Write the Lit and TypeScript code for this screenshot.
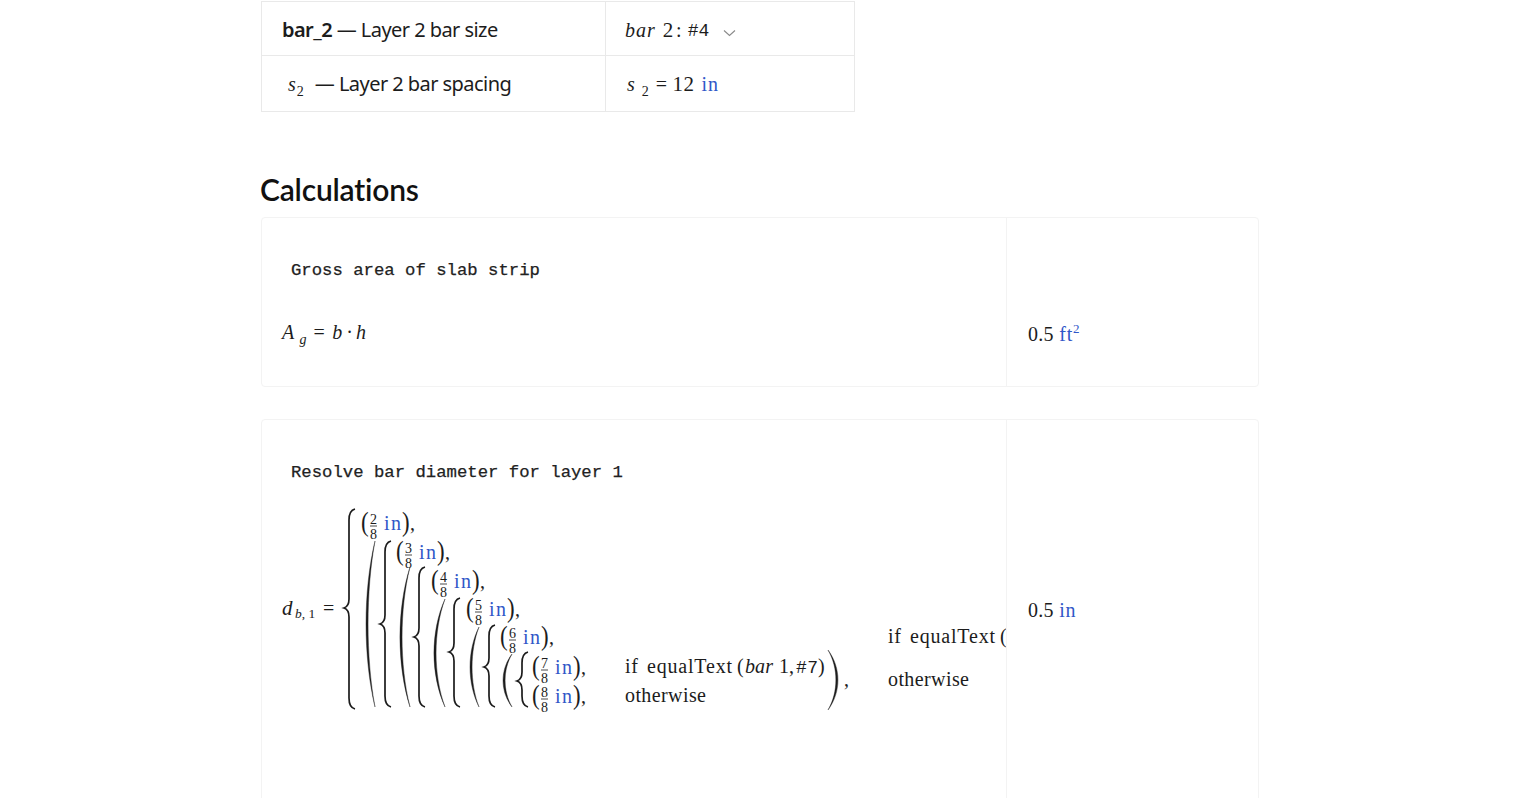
import { LitElement, html, css, svg } from "lit";
import { customElement } from "lit/decorators.js";

// left column of each "(n/8 in)," row, and the baselines
const rows = [
  { n: 2, x: 361, y: 531 },
  { n: 3, x: 396, y: 560 },
  { n: 4, x: 431, y: 589 },
  { n: 5, x: 466, y: 617 },
  { n: 6, x: 500, y: 645 },
  { n: 7, x: 532, y: 675 },
  { n: 8, x: 532, y: 704 },
];

// stem x, top, tip y, bottom
const braces = [
  [349, 510, 609, 710],
  [385, 542, 625, 708],
  [419, 568, 638, 708],
  [454, 599, 653, 708],
  [489, 626, 668, 708],
  [522, 653, 682, 708],
];

// bulge, tips, top, bottom
const parens = [
  [366, 375, 542, 708],
  [400, 410, 568, 708],
  [434, 445, 600, 708],
  [470, 479, 628, 708],
  [503, 512, 655, 708],
];

function bracePath([x, t, m, b]: number[]) {
  return `M${x + 6},${t} C${x + 2},${t + 1} ${x},${t + 4} ${x},${t + 11} L${x},${m - 9} C${x},${m - 4} ${x - 2},${m - 1} ${x - 5},${m} C${x - 2},${m + 1} ${x},${m + 4} ${x},${m + 9} L${x},${b - 11} C${x},${b - 4} ${x + 2},${b - 1} ${x + 6},${b}`;
}

// crescent, controls pushed out so the middle of the curve lands on the bulge
function parenPath(bulge: number, tip: number, t: number, b: number) {
  const h = b - t;
  const dir = tip > bulge ? 1 : -1;
  const c = tip - (tip - bulge) / 0.75;
  const ci = c + dir * 2.8;
  return `M${tip},${t} C${c},${t + h * 0.3} ${c},${t + h * 0.7} ${tip},${b} C${ci},${t + h * 0.7} ${ci},${t + h * 0.3} ${tip},${t}Z`;
}

@customElement("app-root")
export class AppRoot extends LitElement {
  static styles = css`
    :host {
      display: block;
      height: 798px;
      overflow: hidden;
      background: #fff;
      color: #1c1c1c;
      font-family: "Noto Sans", sans-serif;
    }
    .page {
      width: 998px;
      margin: 0 auto;
      padding-top: 1px;
    }
    table {
      border-collapse: collapse;
      table-layout: fixed;
      width: 594px;
    }
    td {
      border: 1px solid #e9e9e9;
      padding: 2px 0 0 20px;
      font-size: 20px;
      letter-spacing: -0.55px;
      white-space: nowrap;
    }
    tr.a td {
      height: 51px;
    }
    tr.b td {
      height: 55px;
      padding-top: 0;
    }
    td.name {
      width: 323px;
    }
    b {
      font-weight: 600;
    }
    .m {
      font-family: "Liberation Serif", serif;
      font-size: 20px;
      letter-spacing: 0.3px;
    }
    .m i {
      letter-spacing: 1px;
    }
    .m sub {
      font-size: 14px;
      line-height: 0;
      letter-spacing: 0;
    }
    .u {
      color: #3057c8;
      letter-spacing: 0.8px;
    }
    .num {
      font-size: 21px;
      letter-spacing: 0.6px;
    }
    .tt {
      font-family: "Liberation Mono", monospace;
      font-size: 18px;
      letter-spacing: 0;
    }
    .label-math {
      margin: 0 11px 0 6px;
    }
    .pick {
      display: inline-flex;
      align-items: center;
      margin-left: -1px;
    }
    .pick .two {
      margin: 0 2px 0 7px;
    }
    .pick .colon {
      margin-right: 6px;
    }
    .pick svg {
      margin-left: 14px;
      margin-top: 5px;
    }
    .s2 {
      margin-left: 1px;
    }
    .s2 sub {
      margin: 0 7px 0 6px;
    }
    .s2 .eq {
      margin-right: 5px;
    }
    .s2 .num {
      margin-right: 7px;
    }
    h2 {
      margin: 60px 0 11px -1px;
      font-family: Lato, sans-serif;
      font-size: 30px;
      line-height: 34px;
      font-weight: 600;
      letter-spacing: -0.2px;
      color: #111;
    }
    .card {
      display: grid;
      grid-template-columns: 744px 1fr;
      border: 1px solid #f3f3f3;
      border-radius: 4px;
      margin-bottom: 32px;
    }
    .title {
      padding: 39px 0 18px 29px;
      font-family: "Liberation Mono", monospace;
      font-size: 17.3px;
      line-height: 28px;
      white-space: pre;
      color: #222;
      -webkit-text-stroke: 0.25px #222;
    }
    .side {
      border-left: 1px solid #f3f3f3;
    }
    .formula {
      min-height: 58px;
      padding: 0 0 25px 20px;
      display: flex;
      align-items: center;
      overflow: hidden;
    }
    .formula svg {
      display: block;
      flex: none;
      overflow: visible;
    }
    .value {
      padding: 0 0 21px 21px;
      display: flex;
      align-items: center;
    }
    .value.tall {
      padding-bottom: 23px;
    }
    .value sup {
      font-size: 13px;
      line-height: 0;
    }
    .tail {
      height: 120px;
    }
    .ag i {
      letter-spacing: 0;
    }
    .ag .eq {
      margin: 0 7px;
    }
    .ag .dot {
      margin: 0 3px 0 4px;
    }
    text {
      font-family: "Liberation Serif", serif;
      fill: #1c1c1c;
    }
    text.blue {
      fill: #3057c8;
    }
    text.tt2 {
      font-family: "Liberation Mono", monospace;
    }
    path.brace {
      fill: none;
      stroke: #1c1c1c;
      stroke-width: 1.7;
    }
    path.paren {
      fill: #1c1c1c;
      stroke: #1c1c1c;
      stroke-width: 0.4;
    }
    line {
      stroke: #1c1c1c;
      stroke-width: 0.8;
    }
  `;

  private renderRow(r: { n: number; x: number; y: number }) {
    return svg`
      <text transform="translate(${r.x} ${r.y + 1}) scale(.85 1)" font-size="27">(</text>
      <text x=${r.x + 12.5} y=${r.y - 6} font-size="14" text-anchor="middle">${r.n}</text>
      <line x1=${r.x + 9} x2=${r.x + 16} y1=${r.y - 4} y2=${r.y - 4}></line>
      <text x=${r.x + 12.5} y=${r.y + 9} font-size="14" text-anchor="middle">8</text>
      <text class="blue" x=${r.x + 23} y=${r.y} font-size="20" textLength="17">in</text>
      <text transform="translate(${r.x + 41} ${r.y + 1}) scale(.85 1)" font-size="27">)</text>
      <text x=${r.x + 49} y=${r.y} font-size="20">,</text>
    `;
  }

  private renderBigFormula() {
    return html`<svg width="724" height="208" viewBox="282 506 724 208">
      <text x="282" y="616" font-size="21" font-style="italic">d</text>
      <text x="295" y="619" font-size="13.5"><tspan font-style="italic">b</tspan>, 1</text>
      <text x="323" y="616" font-size="20">=</text>
      ${braces.map((b) => svg`<path class="brace" d=${bracePath(b)}></path>`)}
      ${parens.map(([l, r, t, b]) => svg`<path class="paren" d=${parenPath(l, r, t, b)}></path>`)}
      ${rows.map((r) => this.renderRow(r))}

      <text x="625" y="674" font-size="20" textLength="13">if</text>
      <text x="647" y="674" font-size="20" textLength="85">equalText</text>
      <text x="737" y="674" font-size="20">(</text>
      <text x="745" y="674" font-size="20" font-style="italic" textLength="28">bar</text>
      <text x="779" y="674" font-size="20">1,</text>
      <text class="tt2" x="796" y="674" font-size="18" textLength="22">#7</text>
      <text x="818" y="674" font-size="20">)</text>
      <text x="625" y="703" font-size="20" textLength="81">otherwise</text>
      <path class="paren" d=${parenPath(838, 828, 651, 711)}></path>
      <text x="844" y="687" font-size="20">,</text>

      <text x="888" y="644" font-size="20" textLength="13">if</text>
      <text x="910" y="644" font-size="20" textLength="85">equalText</text>
      <text x="1000" y="644" font-size="20">(</text>
      <text x="888" y="687" font-size="20" textLength="81">otherwise</text>
    </svg>`;
  }

  render() {
    return html`
      <div class="page">
        <table>
          <tr class="a">
            <td class="name"><b>bar_2</b> — Layer 2 bar size</td>
            <td>
              <span class="pick m">
                <i>bar</i><span class="two num">2</span><span class="colon">:</span><span class="tt">#4</span>
                <svg width="13" height="8" viewBox="0 0 13 8">
                  <path d="M1 1.5 L6.5 6.5 L12 1.5" fill="none" stroke="#8a8a8a" stroke-width="1.1"></path>
                </svg>
              </span>
            </td>
          </tr>
          <tr class="b">
            <td class="name"><span class="m label-math"><i>s</i><sub>2</sub></span>— Layer 2 bar spacing</td>
            <td>
              <span class="m s2"><i>s</i><sub>2</sub><span class="eq">=</span><span class="num">12</span><span class="u">in</span></span>
            </td>
          </tr>
        </table>

        <h2>Calculations</h2>

        <section class="card">
          <div class="title">Gross area of slab strip</div>
          <div class="side"></div>
          <div class="formula m ag">
            <span><i>A</i> <sub><i>g</i></sub><span class="eq">=</span><i>b</i><span class="dot">·</span><i>h</i></span>
          </div>
          <div class="side value m"><span>0.5 <span class="u">ft<sup>2</sup></span></span></div>
        </section>

        <section class="card">
          <div class="title">Resolve bar diameter for layer 1</div>
          <div class="side"></div>
          <div class="formula">${this.renderBigFormula()}</div>
          <div class="side value tall m"><span>0.5 <span class="u">in</span></span></div>
          <div class="tail"></div>
          <div class="side tail"></div>
        </section>
      </div>
    `;
  }
}
